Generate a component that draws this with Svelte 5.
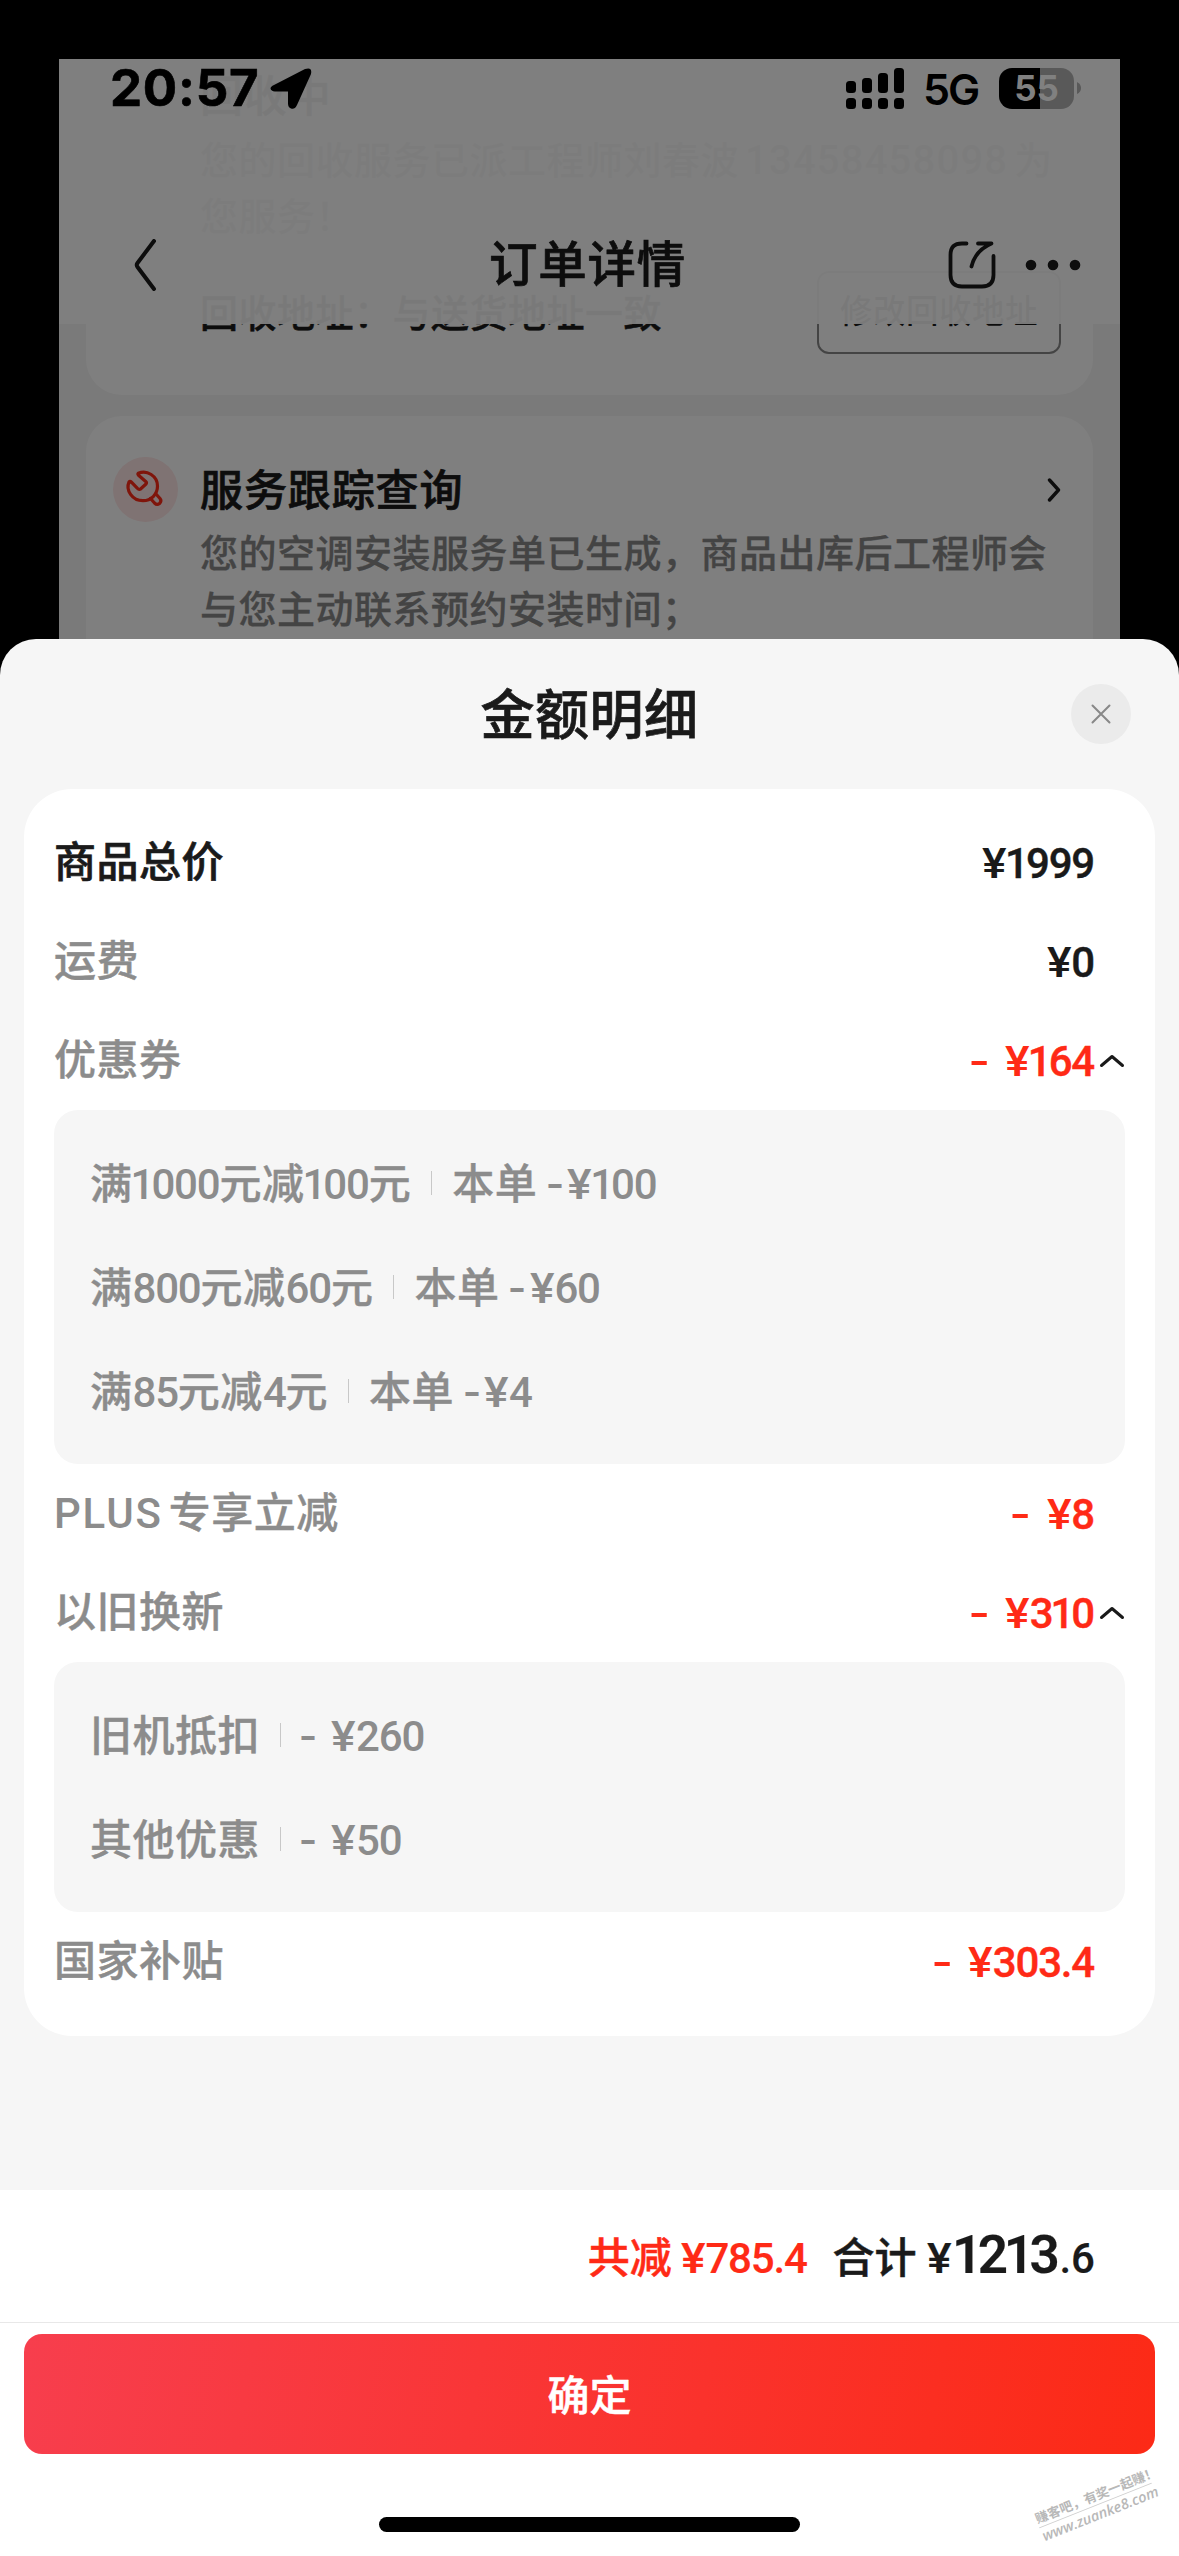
<script lang="ts">
	type Line = { label: string; amount: string };
	type Row = {
		label: string;
		amount: string;
		strong?: boolean;
		discount?: boolean;
		lines?: Line[];
	};

	const rows: Row[] = [
		{ label: "商品总价", amount: "¥1999", strong: true },
		{ label: "运费", amount: "¥0" },
		{
			label: "优惠券",
			amount: "- ¥164",
			discount: true,
			lines: [
				{ label: "满1000元减100元", amount: "本单 -¥100" },
				{ label: "满800元减60元", amount: "本单 -¥60" },
				{ label: "满85元减4元", amount: "本单 -¥4" },
			],
		},
		{ label: "PLUS专享立减", amount: "- ¥8", discount: true },
		{
			label: "以旧换新",
			amount: "- ¥310",
			discount: true,
			lines: [
				{ label: "旧机抵扣", amount: "- ¥260" },
				{ label: "其他优惠", amount: "- ¥50" },
			],
		},
		{ label: "国家补贴", amount: "- ¥303.4", discount: true },
	];

	// digits are set tighter than the Chinese text, and "1" tighter still
	function kind(t: string) {
		if (t === "1") return "one";
		if (t === "¥") return "yen";
		if (t === "-") return "minus";
		if (t === "PLUS") return "latin";
		return /[\d.]/.test(t) ? "num" : "han";
	}

	function runs(text: string) {
		return text
			.split(/(1|¥|PLUS|-|[02-9.]+)/)
			.filter((t) => t !== "")
			.map((t) => ({ t, kind: kind(t) }));
	}
</script>

{#snippet mixed(text: string)}{#each runs(text) as r}<span class={r.kind}>{r.t}</span>{/each}{/snippet}

<div class="screen">
	<div class="page">
		<div class="scroll">
			<section class="bg-card recycle">
				<h3>回收中</h3>
				<p>您的回收服务已派工程师刘春波<span class="phone">13458458098</span>为您服务！</p>
				<div class="address">
					<span class="place">回收地址：与送货地址一致</span>
					<span class="modify">修改回收地址</span>
				</div>
			</section>
			<section class="bg-card service">
				<div class="badge">
					<svg viewBox="0 0 65 65" width="65" height="65">
						<g fill="none" stroke="#ff2a16" stroke-width="3.2" stroke-linejoin="round" stroke-linecap="round">
							<path d="M25.300 16.300C34 12.500 44.500 19 44.500 29C44.500 37.500 38 43.700 30 43.700C19 43.700 12.500 33 16 25Q17 23.700 18.200 24.900L24.200 31.200Q26 33 27.800 31.800L33 27Q34 25.700 32.700 24.500L25.500 18.200Q24.500 17 25.300 16.300Z" />
							<path d="M37.500 41.500L41.500 46Q44 48.500 46.500 46.500Q49 44 47 41.500L43 37" />
						</g>
					</svg>
				</div>
				<div class="service-text">
					<div class="service-head">
						<h3>服务跟踪查询</h3>
						<svg viewBox="0 0 14 24" width="14" height="24">
							<path d="M2.500 2L11.500 12L2.500 22" fill="none" stroke="#1a1a1a" stroke-width="3.4" stroke-linecap="round" stroke-linejoin="round" />
						</svg>
					</div>
					<p>您的空调安装服务单已生成，商品出库后工程师会与您主动联系预约安装时间；</p>
				</div>
			</section>
		</div>
		<header class="nav">
			<svg viewBox="0 0 24 52" width="24" height="52">
				<path d="M21 2L4.500 24Q3 26 4.500 28L21 50" fill="none" stroke="#1a1a1a" stroke-width="4" stroke-linecap="round" />
			</svg>
			<h1>订单详情</h1>
			<div class="tools">
				<svg viewBox="0 0 48 48" width="48" height="48">
					<g fill="none" stroke="#1a1a1a" stroke-width="3.800" stroke-linecap="round" stroke-linejoin="round">
						<path d="M18.500 2.500H14Q2.500 2.500 2.500 14V34Q2.500 45.500 14 45.500H34Q45.500 45.500 45.500 34V15" />
						<path d="M30 2.500H43.500C33 7 26 15 23.500 25.500" />
					</g>
				</svg>
				<svg viewBox="0 0 56 12" width="56" height="12">
					<circle cx="6" cy="6" r="5.300" fill="#1a1a1a" />
					<circle cx="28" cy="6" r="5.300" fill="#1a1a1a" />
					<circle cx="50" cy="6" r="5.300" fill="#1a1a1a" />
				</svg>
			</div>
		</header>
		<div class="mask"></div>
	</div>

	<div class="status">
		<div class="clock">
			<span class="time">20:57</span>
			<svg viewBox="0 0 42 42" width="42" height="45">
				<path d="M4 17.500L35 1.500Q42.500 -1 41 6.500L27 37.500Q24.500 42.500 21 41Q18 40 18 36V24H5Q1 23.500 .5 21Q.5 19 4 17.500Z" />
			</svg>
		</div>
		<div class="signal">
			<svg viewBox="0 0 58 41" width="58" height="41">
				<rect x="0" y="13" width="10" height="12" rx="3.500" />
				<rect x="16" y="10" width="10" height="15" rx="3.500" />
				<rect x="32" y="5" width="10" height="20" rx="3.500" />
				<rect x="48" y="0" width="10" height="25" rx="3.500" />
				<rect x="0" y="30" width="10" height="11" rx="3.500" />
				<rect x="16" y="30" width="10" height="11" rx="3.500" />
				<rect x="32" y="30" width="10" height="11" rx="3.500" />
				<rect x="48" y="30" width="10" height="11" rx="3.500" />
			</svg>
			<span class="network">5G</span>
			<div class="battery">55</div>
			<svg class="tip" viewBox="0 0 4 12" width="4" height="12">
				<path d="M0 0Q4 2 4 6T0 12Z" fill="#595959" />
			</svg>
		</div>
	</div>

	<main class="sheet">
		<div class="sheet-head">
			<h2>金额明细</h2>
			<div class="close">
				<svg viewBox="0 0 20 20" width="20" height="20">
					<path d="M1.500 1.500L18.500 18.500M18.500 1.500L1.500 18.500" stroke="#888" stroke-width="2" stroke-linecap="round" />
				</svg>
			</div>
		</div>

		<div class="details">
			{#each rows as row}
				<div class="row" class:strong={row.strong} class:discount={row.discount}>
					<span class="label">{@render mixed(row.label)}</span>
					<span class="amount">{@render mixed(row.amount)}</span>
					<span class="caret">
						{#if row.lines}
							<svg viewBox="0 0 26 14" width="26" height="14">
								<path d="M2.500 11.500L13 2.500L23.500 11.500" fill="none" stroke="#1a1a1a" stroke-width="3" stroke-linecap="round" stroke-linejoin="round" />
							</svg>
						{/if}
					</span>
				</div>
				{#if row.lines}
					<div class="sub">
						{#each row.lines as line}
							<div class="line">
								<span>{@render mixed(line.label)}</span>
								<i></i>
								<span>{@render mixed(line.amount)}</span>
							</div>
						{/each}
					</div>
				{/if}
			{/each}
		</div>

		<footer>
			<div class="total">
				<span class="saved">共减<b>{@render mixed("¥785.4")}</b></span>
				<span class="sum">合计<b class="unit">¥</b><b class="big">1213</b><b class="cents">.6</b></span>
			</div>
			<button>确定</button>
			<div class="home"></div>
			<div class="watermark">
				<div>赚客吧，有奖一起赚！</div>
				<div class="site">www.zuanke8.com</div>
			</div>
		</footer>
	</main>
</div>

<style>
	:global(body) {
		background: #000;
	}

	.screen {
		position: relative;
		width: 1179px;
		height: 2556px;
		overflow: hidden;
		box-sizing: border-box;
		padding-top: 59px;
		background: #000;
		color: #1a1a1a;
		font-family: Roboto, "Noto Sans CJK SC", sans-serif;
		font-weight: 500;
	}

	h1,
	h2,
	h3,
	p {
		margin: 0;
		font-weight: 500;
	}

	h1,
	h2,
	h3 {
		-webkit-text-stroke: 0.7px currentColor;
	}

	svg {
		display: block;
		flex: none;
	}

	.page {
		position: relative;
		width: 1061px;
		height: 580px;
		margin: 0 auto;
		overflow: hidden;
		background: #f5f5f5;
	}

	.scroll {
		display: flex;
		flex-direction: column;
		gap: 21px;
		padding: 0 27px;
	}

	.bg-card {
		box-sizing: border-box;
		background: #fff;
		border-radius: 36px;
	}

	.bg-card h3 {
		font-size: 43px;
		letter-spacing: 0.9px;
		line-height: 60px;
		white-space: nowrap;
	}

	.bg-card p {
		font-size: 38px;
		letter-spacing: 0.5px;
		line-height: 56px;
		color: #888;
		-webkit-text-stroke: 0.3px currentColor;
	}

	.recycle {
		height: 336px;
		padding: 8px 26px 0 114px;
	}

	.recycle p {
		margin-top: 6px;
	}

	.phone {
		font-size: 40px;
		margin: 0 6px;
		letter-spacing: 1.2px;
	}

	.address {
		display: flex;
		align-items: center;
		justify-content: space-between;
		margin-top: 26px;
		font-size: 38px;
		letter-spacing: 0.5px;
		white-space: nowrap;
	}

	.place {
		padding-bottom: 5px;
		-webkit-text-stroke: 0.5px currentColor;
	}

	.modify {
		box-sizing: border-box;
		width: 244px;
		height: 83px;
		margin-right: 6px;
		border: 2px solid #888;
		border-radius: 12px;
		text-align: center;
		line-height: 78px;
		font-size: 32.5px;
	}

	.service {
		display: flex;
		height: 260px;
		padding: 41px 26px 0 27px;
		gap: 22px;
	}

	.badge {
		width: 65px;
		height: 65px;
		flex: none;
		border-radius: 50%;
		background: #ffe6e6;
	}

	.service-text {
		flex: 1;
		white-space: nowrap;
	}

	.service-text p {
		white-space: normal;
		width: 860px;
		margin-top: 4px;
	}

	.service-head {
		display: flex;
		justify-content: space-between;
		align-items: center;
		height: 65px;
		padding-right: 6px;
	}

	.service-head h3 {
		padding-top: 2px;
	}

	/* translucent bar the list scrolls under */
	.nav {
		position: absolute;
		top: 0;
		left: 0;
		right: 0;
		height: 265px;
		box-sizing: border-box;
		padding: 146px 39px 0 74px;
		display: flex;
		justify-content: space-between;
		align-items: center;
		background: rgba(255, 255, 255, 0.95);
	}

	.nav h1 {
		font-size: 48.5px;
		letter-spacing: 0.8px;
		margin-left: 70px;
		padding-top: 2px;
		line-height: 60px;
	}

	.tools {
		display: flex;
		align-items: center;
		gap: 29px;
	}

	.mask {
		position: absolute;
		inset: 0;
		background: rgba(0, 0, 0, 0.5);
	}

	.status {
		position: absolute;
		top: 59px;
		left: 110px;
		right: 98px;
		height: 58px;
		display: flex;
		align-items: center;
		justify-content: space-between;
		color: #000;
		font-family: Inter, "Liberation Sans", sans-serif;
	}

	.clock {
		display: flex;
		align-items: center;
		gap: 11px;
	}

	.time {
		font-size: 51px;
		font-weight: 700;
		line-height: 58px;
		letter-spacing: 0.7px;
		-webkit-text-stroke: 0.6px currentColor;
	}

	.signal {
		display: flex;
		align-items: center;
	}

	.network {
		margin-left: 19px;
		width: 56px;
		font-size: 43px;
		font-weight: 600;
		line-height: 58px;
		letter-spacing: -2px;
		padding-top: 1px;
	}

	.battery {
		margin-left: 20px;
		width: 75px;
		height: 41px;
		border-radius: 13px;
		background: linear-gradient(90deg, #000 41px, #595959 41px);
		color: #808080;
		font-size: 35px;
		font-weight: 700;
		line-height: 41px;
		text-align: center;
	}

	.tip {
		margin-left: 3px;
	}

	.sheet {
		position: relative;
		height: 1917px;
		border-radius: 36px 36px 0 0;
		overflow: hidden;
		background: #f6f6f6;
		display: flex;
		flex-direction: column;
	}

	.sheet-head {
		height: 150px;
		flex: none;
		display: grid;
		grid-template-columns: 1fr auto 1fr;
		align-items: center;
		padding: 0 48px;
	}

	.sheet-head h2 {
		grid-column: 2;
		padding-top: 5px;
		font-size: 54px;
		line-height: 70px;
		letter-spacing: 0.5px;
	}

	.close {
		justify-self: end;
		width: 60px;
		height: 60px;
		border-radius: 50%;
		background: #ebebeb;
		display: grid;
		place-items: center;
	}

	.details {
		margin: 0 24px;
		padding: 24px 30px;
		height: 1247px;
		box-sizing: border-box;
		flex: none;
		border-radius: 48px;
		background: #fff;
		font-size: 42px;
		line-height: 60px;
	}

	.row {
		display: flex;
		align-items: center;
		height: 99px;
		color: #8c8c8c;
		white-space: pre;
	}

	.label {
		flex: 1;
		padding-top: 1px;
	}

	.amount {
		padding-top: 2px;
		color: #1a1a1a;
	}

	.strong {
		color: #1a1a1a;
	}

	.strong .han {
		-webkit-text-stroke: 0.7px currentColor;
	}

	.amount .num,
	.amount .one {
		-webkit-text-stroke: 0.4px currentColor;
	}

	.discount .amount {
		color: #ff2a16;
	}

	.caret {
		width: 31px;
		display: flex;
		justify-content: flex-end;
	}

	.han {
		letter-spacing: 0.5px;
		-webkit-text-stroke: 0.4px currentColor;
	}

	.num {
		letter-spacing: -1.2px;
	}

	.one {
		margin-left: -2px;
		letter-spacing: -3px;
	}

	.yen {
		display: inline-block;
		margin: 0 1.5px 0 2px;
		transform: scaleX(1.1);
	}

	.latin {
		letter-spacing: 1.8px;
		margin-right: 6px;
	}

	.minus {
		display: inline-block;
		margin-right: 4px;
		transform: scaleX(1.2);
	}

	.discount .minus {
		margin-right: 7px;
		transform: scaleX(1.4);
	}

	.sub {
		padding: 21px 36px;
		border-radius: 24px;
		background: #f6f6f6;
		color: #8c8c8c;
	}

	.line {
		display: flex;
		align-items: center;
		height: 104px;
		white-space: pre;
	}

	.line > span {
		padding-top: 3px;
	}

	.line i {
		width: 1px;
		height: 24px;
		margin: 0 20px;
		background: #c8c8c8;
	}

	footer {
		position: relative;
		margin-top: auto;
		height: 366px;
		background: #fff;
	}

	.total {
		display: flex;
		justify-content: flex-end;
		align-items: baseline;
		box-sizing: border-box;
		height: 133px;
		padding: 30px 84px 0 0;
		border-bottom: 1px solid #e8e8e8;
		font-size: 42px;
		line-height: 70px;
		gap: 26px;
		-webkit-text-stroke: 0.5px currentColor;
	}

	.total b {
		font-weight: 500;
		-webkit-text-stroke: 0.2px currentColor;
	}

	.saved {
		color: #ff2a16;
	}

	.saved b {
		margin-left: 8px;
	}

	.total .unit {
		display: inline-block;
		margin: 0 2px 0 11px;
		transform: scaleX(1.1);
	}

	.total .big {
		font-size: 53px;
		font-weight: 600;
		letter-spacing: -4.4px;
	}

	.cents {
		margin-left: 4px;
	}

	button {
		display: block;
		width: 1131px;
		height: 120px;
		margin: 11px 24px 0;
		padding: 0 0 4px;
		border: 0;
		border-radius: 18px;
		background: linear-gradient(100deg, #f73e4d, #fc2a16);
		color: #fff;
		font: inherit;
		font-size: 42px;
		-webkit-text-stroke: 0.5px currentColor;
	}

	.home {
		width: 421px;
		height: 15px;
		margin: 63px auto 0;
		border-radius: 8px;
		background: #000;
	}

	.watermark {
		position: absolute;
		left: 1035px;
		top: 298px;
		width: 121px;
		transform: rotate(-21.7deg);
		color: #b8b8b8;
		font-size: 13px;
		font-weight: 700;
		line-height: 17px;
		white-space: nowrap;
	}

	.site {
		border-top: 1px solid #cfcfcf;
		font-family: "Open Sans", sans-serif;
		font-weight: 600;
		font-size: 14.5px;
		font-style: italic;
	}
</style>
